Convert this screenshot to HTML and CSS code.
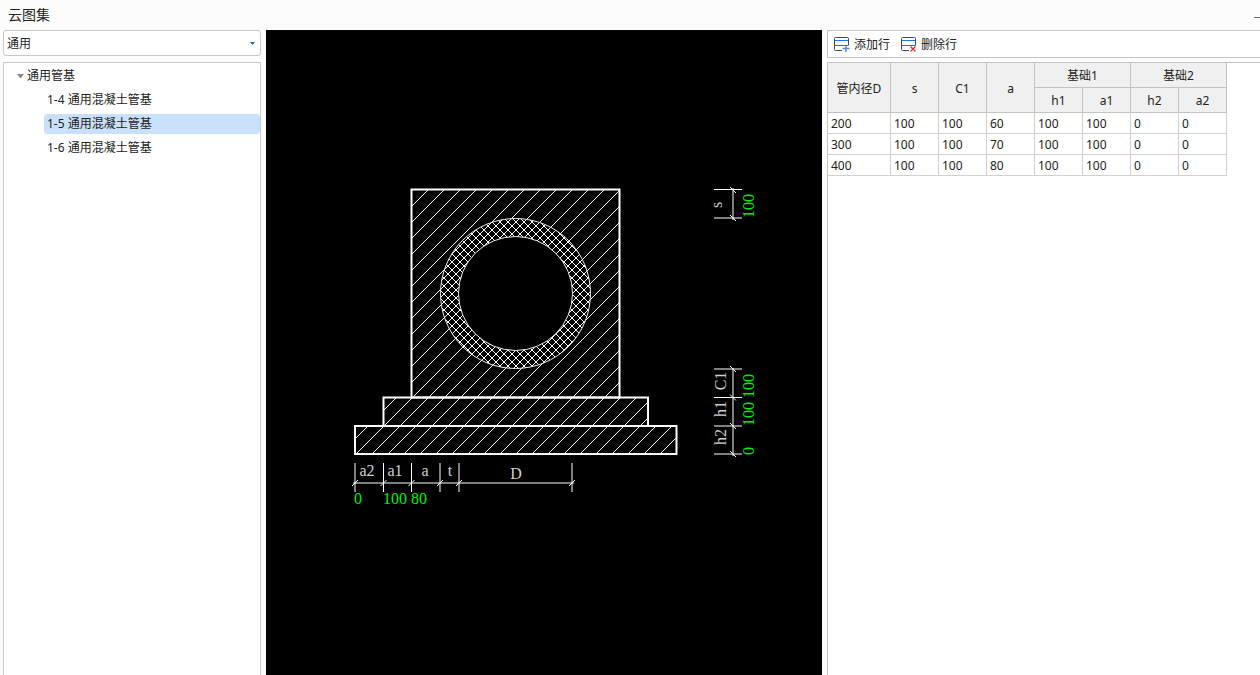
FILE: index.html
```html
<!DOCTYPE html>
<html lang="zh-CN">
<head>
  <meta charset="UTF-8" />
  <meta name="viewport" content="width=device-width, initial-scale=1.0"/>
  <title>云图集</title>
  <link rel="stylesheet" href="styles.css">
</head>
<body>

  <header class="title-bar">
    <h1>云图集</h1>
    <button type="button" class="minimize" aria-label="最小化"></button>
  </header>

  <main class="workspace">

    <aside class="sidebar">
      <div class="select-box">
        <select name="category" aria-label="图集分类">
          <option>通用</option>
        </select>
        <svg class="select-arrow" width="6" height="4" viewBox="0 0 6 4"><path d="M0 0h5L2.5 3z" fill="#33669a"/></svg>
      </div>

      <nav class="tree">
        <button type="button" class="tree-root" aria-expanded="true">
          <svg width="8" height="5" viewBox="0 0 8 5"><path d="M0 0h7L3.5 4.5z" fill="#888"/></svg>
          通用管基
        </button>
        <ul>
          <li><a href="#">1-4 通用混凝土管基</a></li>
          <li><a href="#" class="active" aria-current="true">1-5 通用混凝土管基</a></li>
          <li><a href="#">1-6 通用混凝土管基</a></li>
        </ul>
      </nav>
    </aside>

    <section class="drawing">
      <svg viewBox="266 30 556 645" role="img" aria-label="1-5 通用混凝土管基">
        <defs>
          <pattern id="hatch" width="16" height="16" patternUnits="userSpaceOnUse" x="10" y="0">
            <path d="M-2 2L2 -2M-2 18L18 -2M14 18L18 14" stroke="#fff" stroke-width="1"/>
          </pattern>
          <pattern id="cross" width="8" height="8" patternUnits="userSpaceOnUse" x="4" y="6">
            <path d="M-1 9L9 -1M-1 -1L9 9" stroke="#fff" stroke-width="1"/>
          </pattern>
        </defs>

        <!-- concrete base -->
        <g class="outline">
          <rect x="411.5" y="189.5" width="208" height="208"/>
          <rect x="383.5" y="397.5" width="264.5" height="28.5"/>
          <rect x="355" y="426" width="321.5" height="28"/>
        </g>

        <!-- pipe -->
        <circle cx="515.5" cy="293.5" r="75" fill="#000"/>
        <circle class="pipe" cx="515.5" cy="293.5" r="75" fill="url(#cross)"/>
        <circle class="pipe" cx="515.5" cy="293.5" r="57" fill="#000"/>

        <!-- horizontal dimensions -->
        <path class="dim" d="M353 483H574M355 463V492M383.5 463V492M411.5 463V492M440 463V492M459 463V492M572 463V492"/>
        <path class="tick" d="M352 486l6-6M380.5 486l6-6M408.5 486l6-6M437 486l6-6M456 486l6-6M569 486l6-6"/>
        <g class="label">
          <text x="367" y="476">a2</text>
          <text x="395" y="476">a1</text>
          <text x="425" y="476">a</text>
          <text x="450" y="476">t</text>
          <text x="516" y="479">D</text>
        </g>
        <g class="value">
          <text x="354" y="504">0</text>
          <text x="383" y="504">100</text>
          <text x="411" y="504">80</text>
        </g>

        <!-- vertical dimensions -->
        <path class="dim" d="M733 188V220M714 189.5H742M714 218H742M733 368V456M714 369H742M714 397.5H742M714 426H742M714 454H742"/>
        <path class="tick" d="M730 187l6 6M730 215l6 6M730 366l6 6M730 394.5l6 6M730 423l6 6M730 451l6 6"/>
        <g class="label">
          <text transform="translate(722 205) rotate(-90)">s</text>
          <text transform="translate(726 381) rotate(-90)">C1</text>
          <text transform="translate(726 409) rotate(-90)">h1</text>
          <text transform="translate(726 437) rotate(-90)">h2</text>
        </g>
        <g class="value">
          <text transform="translate(754 218) rotate(-90)">100</text>
          <text transform="translate(754 398) rotate(-90)">100</text>
          <text transform="translate(754 426) rotate(-90)">100</text>
          <text transform="translate(754 455) rotate(-90)">0</text>
        </g>
      </svg>
    </section>

    <section class="params">
      <div class="toolbar">
        <button type="button">
          <svg width="16" height="16" viewBox="0 0 16 16" fill="none">
            <path d="M8 13.5H1.5Q0.5 13.5 0.5 12.5V1.5Q0.5 0.5 1.5 0.5H13.5Q14.5 0.5 14.5 1.5V8.5" stroke="#44485c"/>
            <path d="M1 3.5H14M1 8.5H14" stroke="#1a73e8" stroke-width="1.2"/>
            <path d="M12 8.5V15M8.5 11.5H15.5" stroke="#4a94ee" stroke-width="1.5"/>
          </svg>
          添加行
        </button>
        <button type="button">
          <svg width="16" height="16" viewBox="0 0 16 16" fill="none">
            <path d="M8 13.5H1.5Q0.5 13.5 0.5 12.5V1.5Q0.5 0.5 1.5 0.5H13.5Q14.5 0.5 14.5 1.5V8.5" stroke="#44485c"/>
            <path d="M1 3.5H14M1 8.5H14" stroke="#1a73e8" stroke-width="1.2"/>
            <path d="M9.5 9.5L14.5 14.5M14.5 9.5L9.5 14.5" stroke="#e02a35" stroke-width="1.3"/>
          </svg>
          删除行
        </button>
      </div>

      <div class="table-box">
        <table>
          <colgroup>
            <col class="col-wide">
            <col span="7">
          </colgroup>
          <thead>
            <tr>
              <th rowspan="2">管内径D</th>
              <th rowspan="2">s</th>
              <th rowspan="2">C1</th>
              <th rowspan="2">a</th>
              <th colspan="2">基础1</th>
              <th colspan="2">基础2</th>
            </tr>
            <tr>
              <th>h1</th>
              <th>a1</th>
              <th>h2</th>
              <th>a2</th>
            </tr>
          </thead>
          <tbody>
            <tr><td>200</td><td>100</td><td>100</td><td>60</td><td>100</td><td>100</td><td>0</td><td>0</td></tr>
            <tr><td>300</td><td>100</td><td>100</td><td>70</td><td>100</td><td>100</td><td>0</td><td>0</td></tr>
            <tr><td>400</td><td>100</td><td>100</td><td>80</td><td>100</td><td>100</td><td>0</td><td>0</td></tr>
          </tbody>
        </table>
      </div>
    </section>

  </main>

</body>
</html>
```
FILE: styles.css
```css
* {
  box-sizing: border-box;
}

body {
  margin: 0;
  height: 100vh;
  display: flex;
  flex-direction: column;
  overflow: hidden;
  background: #fcfcfc;
  color: #222;
  font: 12px/16px "Noto Sans", "Noto Sans CJK SC", sans-serif;
}

button, select {
  font: inherit;
  color: inherit;
}

button {
  padding: 0;
  border: none;
  background: none;
}

.title-bar {
  display: flex;
  align-items: center;
  justify-content: space-between;
  height: 30px;
  padding-left: 8px;
}

h1 {
  margin: 0;
  font-size: 14px;
  font-weight: normal;
}

.minimize {
  width: 6px;
  height: 1px;
  margin-top: 4px;
  background: #666;
}

.workspace {
  flex: 1;
  min-height: 0;
  display: flex;
  gap: 5px;
  padding-left: 3px;
}

.sidebar {
  flex: none;
  width: 258px;
  display: flex;
  flex-direction: column;
  gap: 6px;
}

.select-box {
  position: relative;
}

.select-box select {
  display: block;
  width: 100%;
  height: 26px;
  padding: 1px 3px 0;
  border: 1px solid #c8c8c8;
  border-radius: 3px;
  background: #fff;
  appearance: none;
}

.select-arrow {
  position: absolute;
  right: 5px;
  top: 12px;
  pointer-events: none;
}

.tree {
  flex: 1;
  padding-top: 1px;
  border: 1px solid #c8c8c8;
  border-bottom: none;
  background: #fff;
}

.tree-root {
  display: flex;
  align-items: center;
  gap: 2px;
  height: 24px;
  padding-left: 13px;
}

.tree ul {
  margin: 0;
  padding: 0 0 0 40px;
  list-style: none;
}

.tree li {
  padding: 2px 0;
}

.tree a {
  display: block;
  height: 20px;
  padding-left: 3px;
  border-radius: 3px;
  color: inherit;
  line-height: 20px;
  text-decoration: none;
}

.tree a.active {
  background: #c9e0fb;
}

.drawing {
  flex: 556;
  min-width: 0;
  background: #000;
}

.drawing svg {
  display: block;
  width: 100%;
  height: 100%;
}

.outline rect {
  fill: url(#hatch);
  stroke: #fff;
  stroke-width: 2;
}

.pipe {
  stroke: #eee;
  stroke-width: 1;
}

.dim, .tick {
  fill: none;
  stroke: #fff;
  stroke-width: 1;
}

.label, .value {
  font: 16px "Liberation Serif", serif;
}

.label {
  fill: #d0d0d0;
  text-anchor: middle;
}

.value {
  fill: #00f000;
}

.params {
  flex: 433;
  min-width: 0;
  display: flex;
  flex-direction: column;
  gap: 4px;
}

.toolbar {
  display: flex;
  align-items: center;
  gap: 11px;
  height: 28px;
  padding: 2px 0 0 6px;
  border: 1px solid #c3c7cc;
  border-right: none;
  background: #fff;
}

.toolbar button {
  display: flex;
  align-items: center;
  gap: 4px;
}

.table-box {
  flex: 1;
  border: 1px solid #c3c3c3;
  border-right: none;
  border-bottom: none;
  background: #fff;
}

table {
  width: 399px;
  table-layout: fixed;
  border-collapse: separate;
  border-spacing: 0;
}

.col-wide {
  width: 63px;
}

th, td {
  padding: 2px 3px 0;
  border-right: 1px solid #c3c3c3;
  border-bottom: 1px solid #c3c3c3;
}

th {
  height: 25px;
  background: #f0f0f0;
  font-weight: normal;
}

td {
  height: 21px;
  border-color: #d0d0d0;
}
```
